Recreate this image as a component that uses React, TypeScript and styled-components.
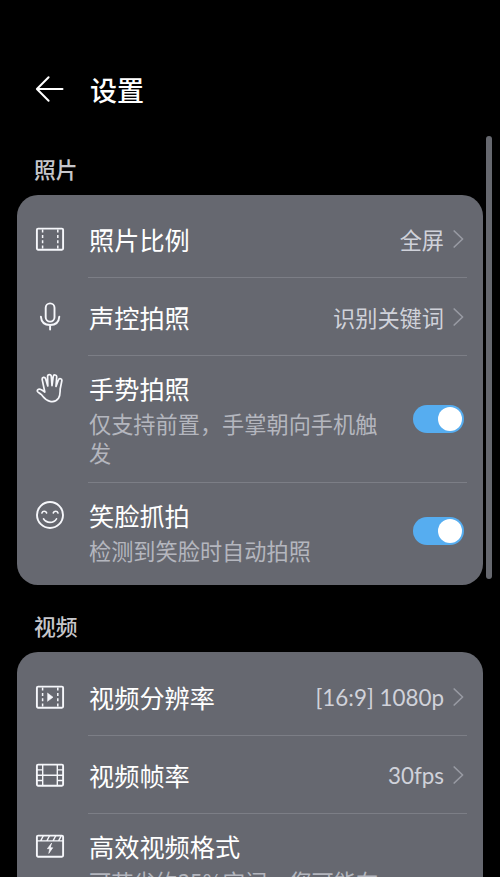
import React from "react";
import styled, { createGlobalStyle } from "styled-components";

const GlobalStyle = createGlobalStyle`
  html, body { margin: 0; background: #000; }
  body { overflow: hidden; }
`;

const Screen = styled.main`
  position: relative;
  box-sizing: border-box;
  width: 500px;
  height: 877px;
  overflow: hidden;
  padding: 64px 17px 0;
  background: #000;
  color: #fff;
  font-family: "Noto Sans CJK SC", sans-serif;
`;

const Header = styled.header`
  display: flex;
  align-items: center;
  gap: 25px;
  height: 50px;
  padding-left: 18px;
`;

const PageTitle = styled.h1`
  margin: 2px 0 0;
  font-size: 27px;
  font-weight: 500;
  line-height: 40px;
`;

const SectionTitle = styled.h2<{ $height: number }>`
  box-sizing: border-box;
  height: ${(p) => p.$height}px;
  margin: 0;
  padding: 0 0 10px 17px;
  display: flex;
  align-items: flex-end;
  color: #c6c7cc;
  font-size: 21.8px;
  font-weight: 500;
  line-height: 32px;
`;

const Card = styled.section`
  box-sizing: border-box;
  width: 466px;
  padding: 5px 0;
  border-radius: 21px;
  background: #666870;
`;

const Row = styled.div<{ $height: number; $top?: boolean }>`
  position: relative;
  box-sizing: border-box;
  display: flex;
  align-items: ${(p) => (p.$top ? "flex-start" : "center")};
  height: ${(p) => p.$height}px;
  padding: ${(p) => (p.$top ? "14px" : "0")} 18px 0;

  &:not(:first-child)::before {
    content: "";
    position: absolute;
    top: -1px;
    left: 71px;
    right: 16px;
    height: 1px;
    background: #7c7e86;
  }
`;

const IconSlot = styled.span<{ $top?: boolean }>`
  flex: none;
  display: flex;
  width: 30px;
  height: 30px;
  margin: ${(p) => (p.$top ? "3px 24px 0 0" : "0 24px 0 0")};
`;

const Copy = styled.div`
  flex: 1;
  min-width: 0;
`;

const Label = styled.div`
  font-size: 25.2px;
  line-height: 36px;
  font-weight: 400;
  white-space: nowrap;
`;

const Description = styled.div`
  width: 294px;
  margin-top: 3px;
  color: #b4b6be;
  font-size: 22.2px;
  line-height: 29px;
`;

const Value = styled.div<{ $latin?: boolean }>`
  margin-right: 8px;
  padding-top: ${(p) => (p.$latin ? 2 : 0)}px;
  color: #d0d2da;
  font-family: ${(p) => (p.$latin ? "Lato, " : "")}"Noto Sans CJK SC", sans-serif;
  font-size: ${(p) => (p.$latin ? 22.4 : 22.2)}px;
  line-height: 32px;
  white-space: nowrap;
`;

const Toggle = styled.button`
  flex: none;
  align-self: center;
  box-sizing: border-box;
  display: flex;
  justify-content: flex-end;
  width: 51px;
  height: 28px;
  margin: -15px 1px 0 0;
  padding: 2px;
  border: 0;
  border-radius: 14px;
  background: #56adf0;
`;

const Knob = styled.span`
  width: 24px;
  height: 24px;
  border-radius: 50%;
  background: #fff;
`;

const ScrollThumb = styled.div`
  position: absolute;
  top: 136px;
  right: 8px;
  width: 6px;
  height: 443px;
  border-radius: 3px;
  background: #66686f;
`;

const Glyph = ({ children }: { children: React.ReactNode }) => (
  <svg width="30" height="30" viewBox="0 0 30 30" fill="none" stroke="#f6f7fb" strokeWidth="1.9" strokeLinecap="round" strokeLinejoin="round">
    {children}
  </svg>
);

const Frame = () => <rect x="1.9" y="4.6" width="26.2" height="21.2" rx="1.2" />;

const RatioIcon = () => (
  <Glyph>
    <Frame />
    <path d="M7.6 5.6v19M22.8 5.6v19" strokeWidth="1.5" strokeDasharray="3 2.3" strokeLinecap="butt" />
  </Glyph>
);

const MicIcon = () => (
  <Glyph>
    <rect x="10.7" y="1.4" width="8.8" height="18.2" rx="4.4" />
    <path d="M5.9 14.6c.4 5.5 4 8.4 9.2 8.4s8.8-2.9 9.2-8.4M15.1 23v4.6" />
  </Glyph>
);

const HandIcon = () => (
  <Glyph>
    <path
      strokeWidth="1.7"
      d="M9.8 19 7.2 6.6C6.800 4 9.900 3.400 10.600 5.800L12.800 13 12.600 3.600C12.600 1 16.100 1 16.300 3.500L17 12.600 18.200 3.600C18.600 1.100 21.900 1.600 21.700 4.100L21 13.400 23.400 7C24.200 4.700 27.300 5.600 26.800 8L25.200 16C25 20 25.400 22.500 23.500 25.200 21.800 27.700 18.500 29 15 28.300 10 27.300 8.500 24 6.500 21.800 5 20.200 3.200 19.600 2.600 18.600 1.700 17 3.400 15.800 5.200 16.300 7 16.800 8.200 17.900 9.800 19z"
    />
  </Glyph>
);

const SmileIcon = () => (
  <Glyph>
    <circle cx="15" cy="15" r="13" />
    <path d="M6.9 12.9c.7-2.1 3.9-2.1 4.7 0M18.3 12.9c.8-2.1 4-2.1 4.7 0M8.5 18.8c3 4.7 10.1 4.7 13 0" strokeWidth="1.6" />
  </Glyph>
);

const ResolutionIcon = () => (
  <Glyph>
    <Frame />
    <path d="M7.6 5.6v19M22.8 5.6v19" strokeWidth="1.5" strokeDasharray="3 2.3" strokeLinecap="butt" />
    <path d="m12.8 11.3 5.2 3.9-5.2 3.9z" fill="#f6f7fb" strokeWidth=".6" />
  </Glyph>
);

const FrameRateIcon = () => (
  <Glyph>
    <Frame />
    <path d="M7.7 4.6v21M22.3 4.6v21M7.7 15.2h14.6M2 9.9h5.7M2 15.2h5.7M2 20.5h5.7M22.3 9.9H28M22.3 15.2H28M22.3 20.5H28" strokeWidth="1.4" />
  </Glyph>
);

const EfficientIcon = () => (
  <Glyph>
    <Frame />
    <path d="M2 9.9h26M8.3 4.8 5.8 9.6M14.5 4.8 12 9.6M20.7 4.8 18.2 9.6M26 5.4 23.7 9.6" strokeWidth="1.4" />
    <path d="m16.4 12.4-4 5.3h2.4l-1 4.7 3.9-5.6h-2.3z" fill="#f6f7fb" strokeWidth=".7" />
  </Glyph>
);

const Chevron = () => (
  <svg width="13" height="20" viewBox="0 0 13 20" fill="none" stroke="#989aa3" strokeWidth="1.7" strokeLinecap="round" strokeLinejoin="round">
    <path d="m2.2 2 8.4 8-8.4 8" />
  </svg>
);

const BackArrow = () => (
  <svg width="30" height="30" viewBox="0 0 30 30" fill="none" stroke="#fff" strokeWidth="2" strokeLinecap="round" strokeLinejoin="round">
    <path d="M27.5 15H2M13.6 3.2 1.9 15l11.7 11.8" />
  </svg>
);

interface LinkRowProps {
  icon: React.ReactNode;
  label: string;
  value: string;
  latin?: boolean;
  height?: number;
}

const LinkRow = ({ icon, label, value, latin, height = 78 }: LinkRowProps) => (
  <Row $height={height}>
    <IconSlot>{icon}</IconSlot>
    <Copy>
      <Label>{label}</Label>
    </Copy>
    <Value $latin={latin}>{value}</Value>
    <Chevron />
  </Row>
);

interface DetailRowProps {
  icon: React.ReactNode;
  label: string;
  description: string;
  height: number;
  toggle?: boolean;
}

const DetailRow = ({ icon, label, description, height, toggle }: DetailRowProps) => (
  <Row $height={height} $top>
    <IconSlot $top>{icon}</IconSlot>
    <Copy>
      <Label>{label}</Label>
      <Description>{description}</Description>
    </Copy>
    {toggle && (
      <Toggle role="switch" aria-checked="true" aria-label={label}>
        <Knob />
      </Toggle>
    )}
  </Row>
);

export default function App() {
  return (
    <>
      <GlobalStyle />
      <Screen>
        <Header>
          <BackArrow />
          <PageTitle>设置</PageTitle>
        </Header>

        <SectionTitle $height={81}>照片</SectionTitle>
        <Card>
          <LinkRow icon={<RatioIcon />} label="照片比例" value="全屏" />
          <LinkRow icon={<MicIcon />} label="声控拍照" value="识别关键词" />
          <DetailRow icon={<HandIcon />} label="手势拍照" description="仅支持前置，手掌朝向手机触发" height={127} toggle />
          <DetailRow icon={<SmileIcon />} label="笑脸抓拍" description="检测到笑脸时自动拍照" height={97} toggle />
        </Card>

        <SectionTitle $height={67}>视频</SectionTitle>
        <Card>
          <LinkRow icon={<ResolutionIcon />} label="视频分辨率" value="[16:9] 1080p" latin height={79} />
          <LinkRow icon={<FrameRateIcon />} label="视频帧率" value="30fps" latin />
          <DetailRow icon={<EfficientIcon />} label="高效视频格式" description="可节省约35%空间，您可能在" height={127} />
        </Card>
        <ScrollThumb />
      </Screen>
    </>
  );
}
